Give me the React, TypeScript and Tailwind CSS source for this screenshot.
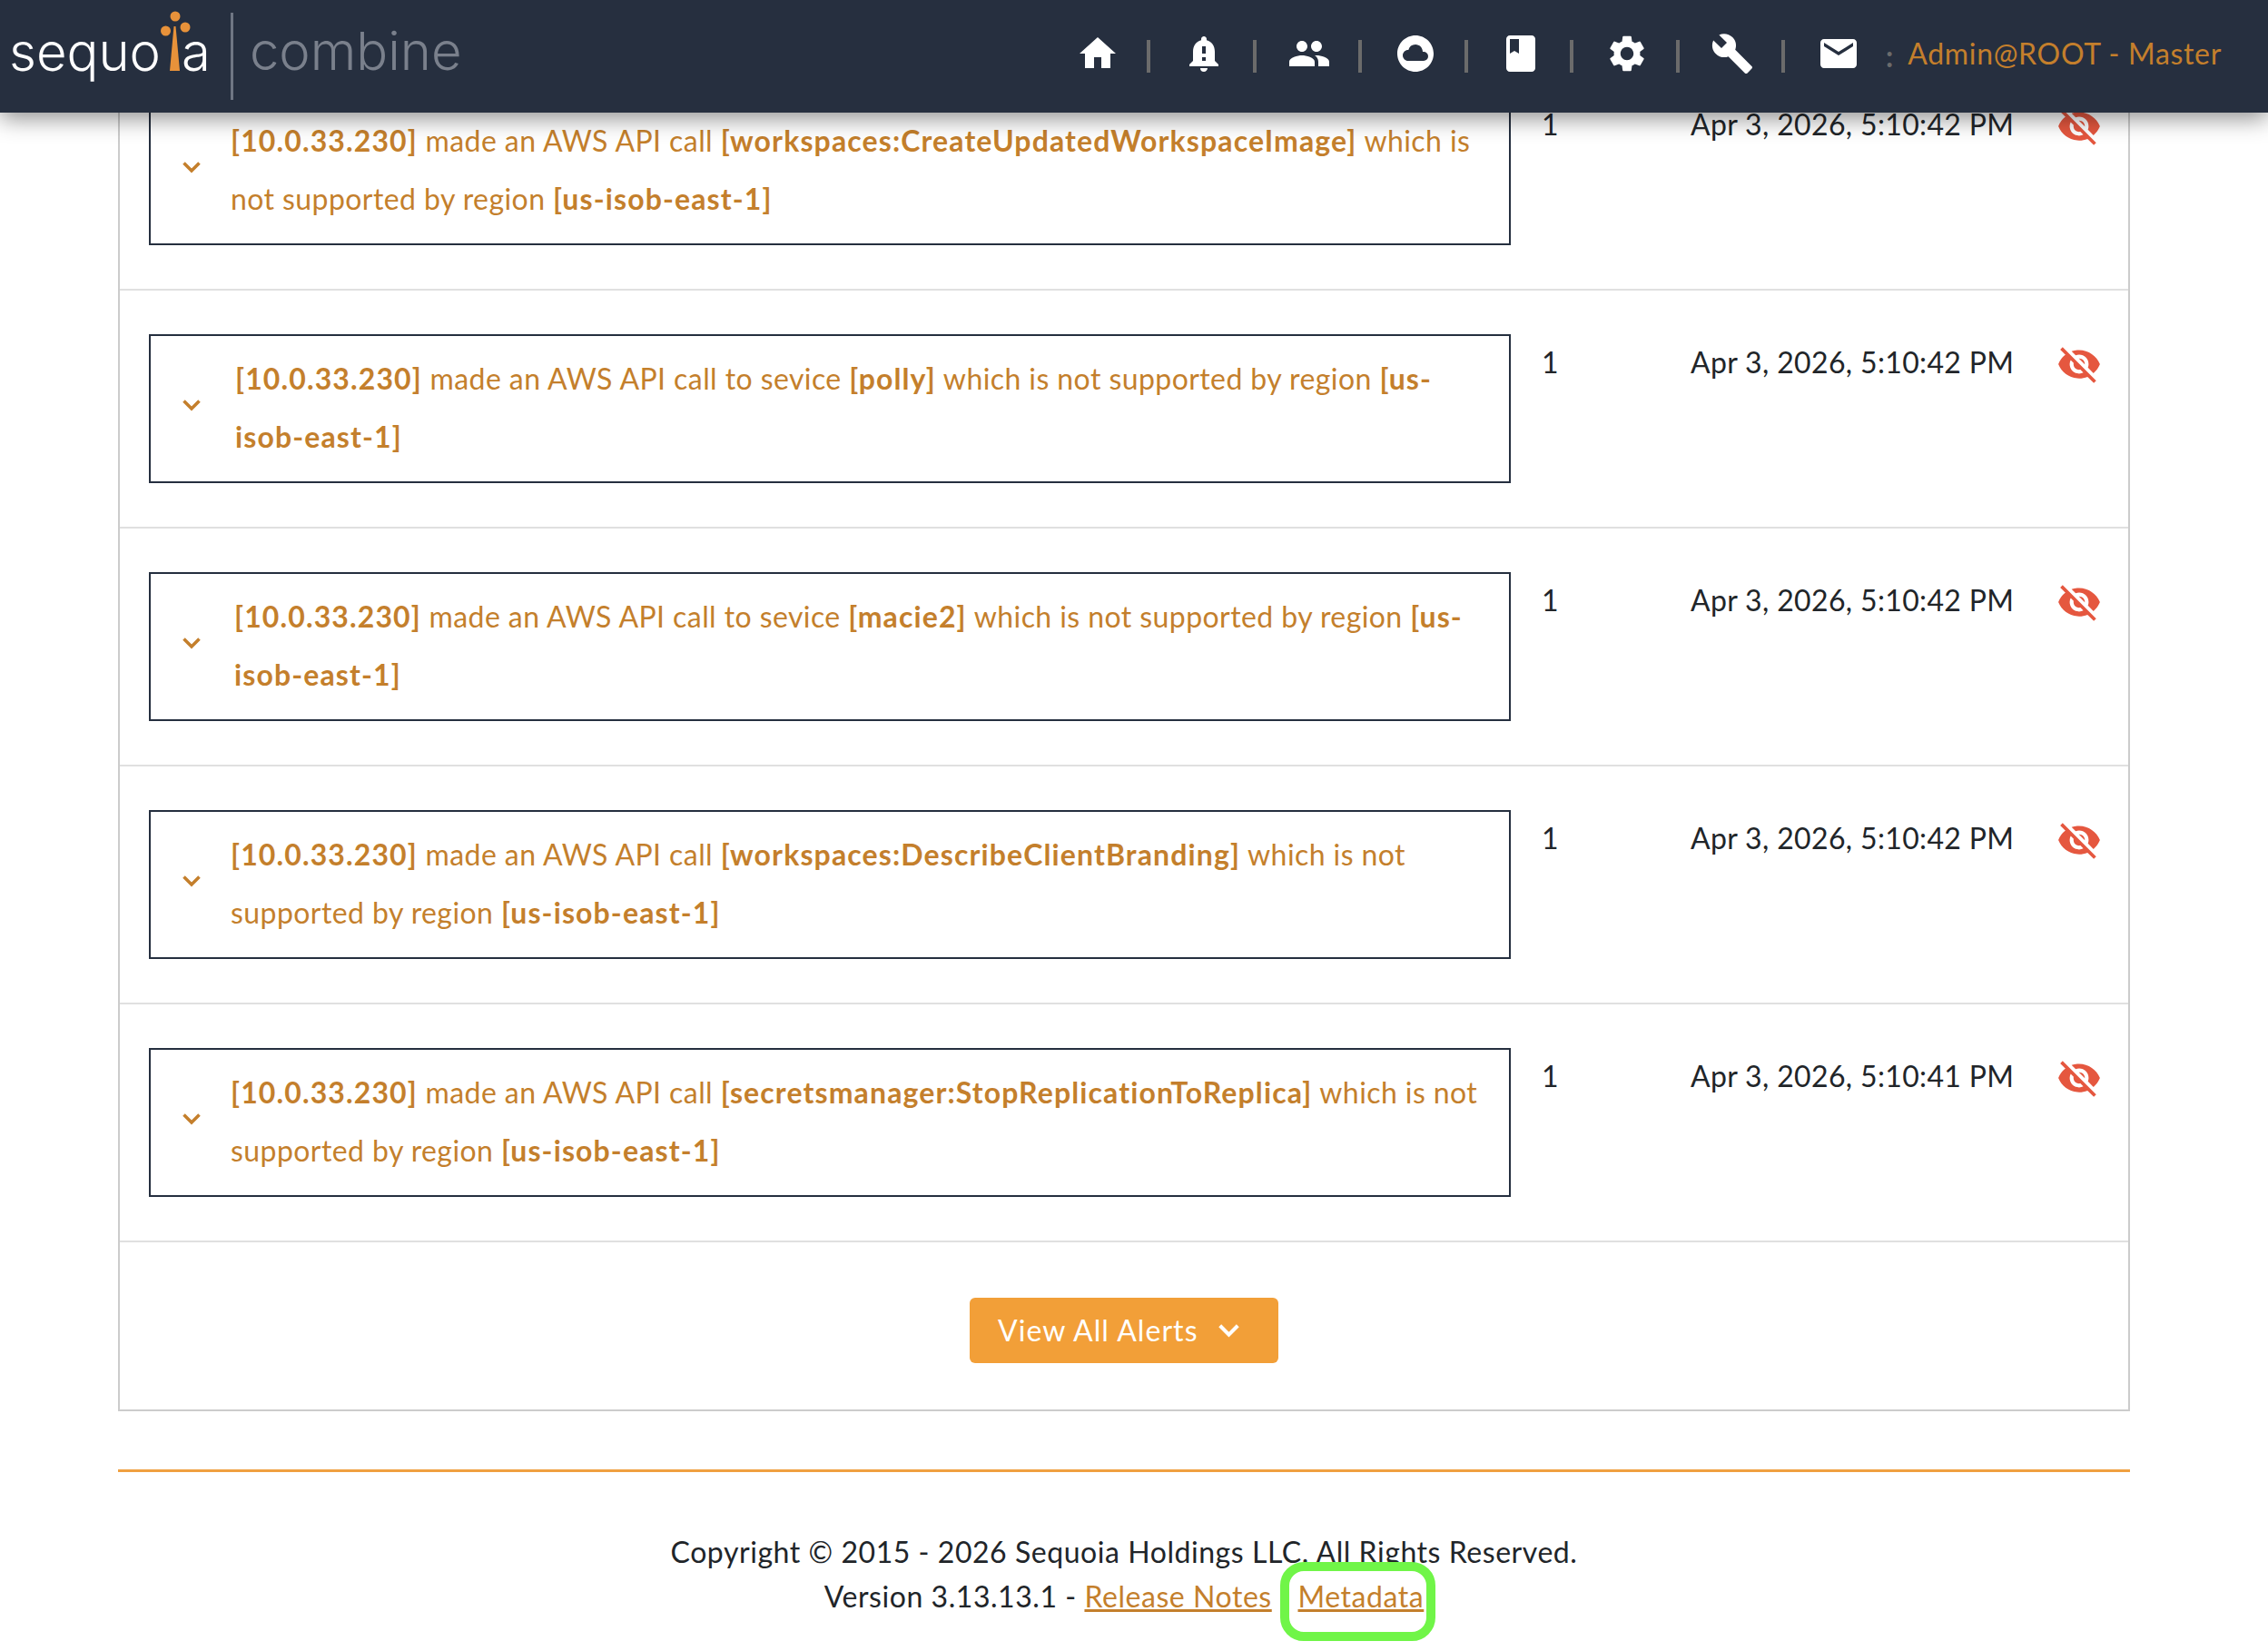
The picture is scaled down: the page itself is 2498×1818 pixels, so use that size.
import React from "react";
import {
  MdHome,
  MdNotificationImportant,
  MdPeople,
  MdCloudCircle,
  MdBook,
  MdSettings,
  MdBuild,
  MdEmail,
  MdVisibilityOff,
} from "react-icons/md";

const icons = [MdHome, MdNotificationImportant, MdPeople, MdCloudCircle, MdBook, MdSettings, MdBuild];

type Seg = string | { b: string };
type Row = { lines: Seg[][]; date: string; pad: string };

const rows: Row[] = [
  {
    pad: "ml-[33px]",
    date: "Apr 3, 2026, 5:10:42 PM",
    lines: [
      [{ b: "[10.0.33.230]" }, " made an AWS API call ", { b: "[workspaces:CreateUpdatedWorkspaceImage]" }, " which is"],
      ["not supported by region ", { b: "[us-isob-east-1]" }],
    ],
  },
  {
    pad: "ml-[38px]",
    date: "Apr 3, 2026, 5:10:42 PM",
    lines: [
      [{ b: "[10.0.33.230]" }, " made an AWS API call to sevice ", { b: "[polly]" }, " which is not supported by region ", { b: "[us-" }],
      [{ b: "isob-east-1]" }],
    ],
  },
  {
    pad: "ml-[37px]",
    date: "Apr 3, 2026, 5:10:42 PM",
    lines: [
      [{ b: "[10.0.33.230]" }, " made an AWS API call to sevice ", { b: "[macie2]" }, " which is not supported by region ", { b: "[us-" }],
      [{ b: "isob-east-1]" }],
    ],
  },
  {
    pad: "ml-[33px]",
    date: "Apr 3, 2026, 5:10:42 PM",
    lines: [
      [{ b: "[10.0.33.230]" }, " made an AWS API call ", { b: "[workspaces:DescribeClientBranding]" }, " which is not"],
      ["supported by region ", { b: "[us-isob-east-1]" }],
    ],
  },
  {
    pad: "ml-[33px]",
    date: "Apr 3, 2026, 5:10:41 PM",
    lines: [
      [{ b: "[10.0.33.230]" }, " made an AWS API call ", { b: "[secretsmanager:StopReplicationToReplica]" }, " which is not"],
      ["supported by region ", { b: "[us-isob-east-1]" }],
    ],
  },
];

function Chevron({ className }: { className: string }) {
  return (
    <svg viewBox="0 0 20 12" className={className} fill="none" stroke="currentColor" strokeWidth="3.6" overflow="visible">
      <polyline points="1.5,1.5 10,10 18.5,1.5" />
    </svg>
  );
}

function AlertRow({ row, first }: { row: Row; first: boolean }) {
  return (
    <div className={`flex items-start px-8 py-12 ${first ? "" : "border-t-2 border-[#e0e0e0]"}`}>
      <div className="flex h-[164px] w-[1500px] shrink-0 items-center border-2 border-[#252f3f] pl-[35px]">
        <Chevron className="mb-[8px] h-[12px] w-[20px] shrink-0 text-[#c47f2c]" />
        <div className={`${row.pad} mb-[2px] whitespace-pre text-[32px] leading-[64px] tracking-[0.42px] text-[#c47f2c]`}>
          {row.lines.map((line, i) => (
            <div key={i}>
              {line.map((s, j) =>
                typeof s === "string" ? <span key={j}>{s}</span> : <b key={j} className="font-bold tracking-[1.12px]">{s.b}</b>
              )}
            </div>
          ))}
        </div>
      </div>
      <div className="ml-[34px] mt-[7px] w-[164px] shrink-0 text-[32px] leading-[48px] text-[#212529]">1</div>
      <div className="mt-[7px] w-[360px] shrink-0 whitespace-nowrap text-[32px] leading-[48px] tracking-[0.35px] text-[#212529]">{row.date}</div>
      <MdVisibilityOff className="ml-[43px] mt-[8px] shrink-0 text-[#e5573f]" size={50} />
    </div>
  );
}

export default function App() {
  return (
    <div className="relative h-[1818px] overflow-hidden bg-white font-['Lato','Liberation_Sans',sans-serif]">
      <header className="relative z-10 flex h-[124px] items-center bg-[#262f3f] shadow-[0_6px_24px_rgba(0,0,0,0.45)]">
        <div className="ml-[10px] flex h-[124px] items-center font-['Inter','Lato',sans-serif] font-light">
          <div className="mb-[12px] flex items-baseline text-[58px] leading-[88px] text-white">
            <span>sequo</span>
            <svg viewBox="0 0 34 66" className="ml-0 mr-[-11px] h-[66px] w-[34px] shrink-0" fill="#e8923a">
              <polygon points="15.5,17 14.5,17 10,66 21,66 16.5,17" />
              <circle cx="16" cy="6" r="5.5" />
              <circle cx="5.5" cy="22" r="5.5" />
              <circle cx="27" cy="18" r="5.5" />
            </svg>
            <span>a</span>
          </div>
          <div className="ml-[22px] h-[96px] w-[3px] bg-[#6f7683]" />
          <div className="mb-[12px] ml-[18px] text-[58px] leading-[88px] text-[#7a808c]">combine</div>
        </div>
        <nav className="ml-auto mr-[51px] flex items-center">
          {icons.map((Icon, i) => (
            <React.Fragment key={i}>
              <Icon size={48} className="mb-[6px] shrink-0 text-white" />
              <div className="ml-[30px] mr-[34.5px] h-[36px] w-[4px] bg-[#6b6b6b]" />
            </React.Fragment>
          ))}
          <MdEmail size={48} className="mb-[6px] shrink-0 text-white" />
          <span className="ml-[28px] text-[32px] font-bold text-[#6b6b6b]">:</span>
          <span className="mb-[6px] ml-[16px] whitespace-nowrap text-[32px] tracking-[0.67px] text-[#c47f2c]">Admin@ROOT - Master</span>
        </nav>
      </header>

      <main className="mx-[130px] mt-[-66px] w-[2216px]">
        <section className="border-x-2 border-b-2 border-[#cccccc]">
          {rows.map((r, i) => (
            <AlertRow key={i} row={r} first={i === 0} />
          ))}
          <div className="flex h-[186px] items-start justify-center border-t-2 border-[#e0e0e0] pt-[61px]">
            <button className="flex h-[72px] w-[340px] items-center rounded-[6px] bg-[#f29f38] pl-[31px] text-[32px] tracking-[1.07px] text-white">
              <span>View All Alerts</span>
              <Chevron className="ml-[22px] h-[14px] w-[23px] shrink-0 text-white" />
            </button>
          </div>
        </section>
        <div className="mt-[64px] h-[3px] bg-[#f0a040]" />
        <footer className="mt-[63px] text-center text-[32px] leading-[49px] tracking-[0.55px] text-[#212529]">
          <div>Copyright © 2015 - 2026 Sequoia Holdings LLC. All Rights Reserved.</div>
          <div>
            Version 3.13.13.1 - <a className="text-[#c47f2c] underline">Release Notes</a>{" "}
            <a className="ml-[20px] text-[#c47f2c] underline">Metadata</a>
          </div>
        </footer>
      </main>

      <div className="absolute left-[1410px] top-[1720px] h-[87px] w-[171px] rounded-[26px] border-[10px] border-[#70f548]" />
    </div>
  );
}
